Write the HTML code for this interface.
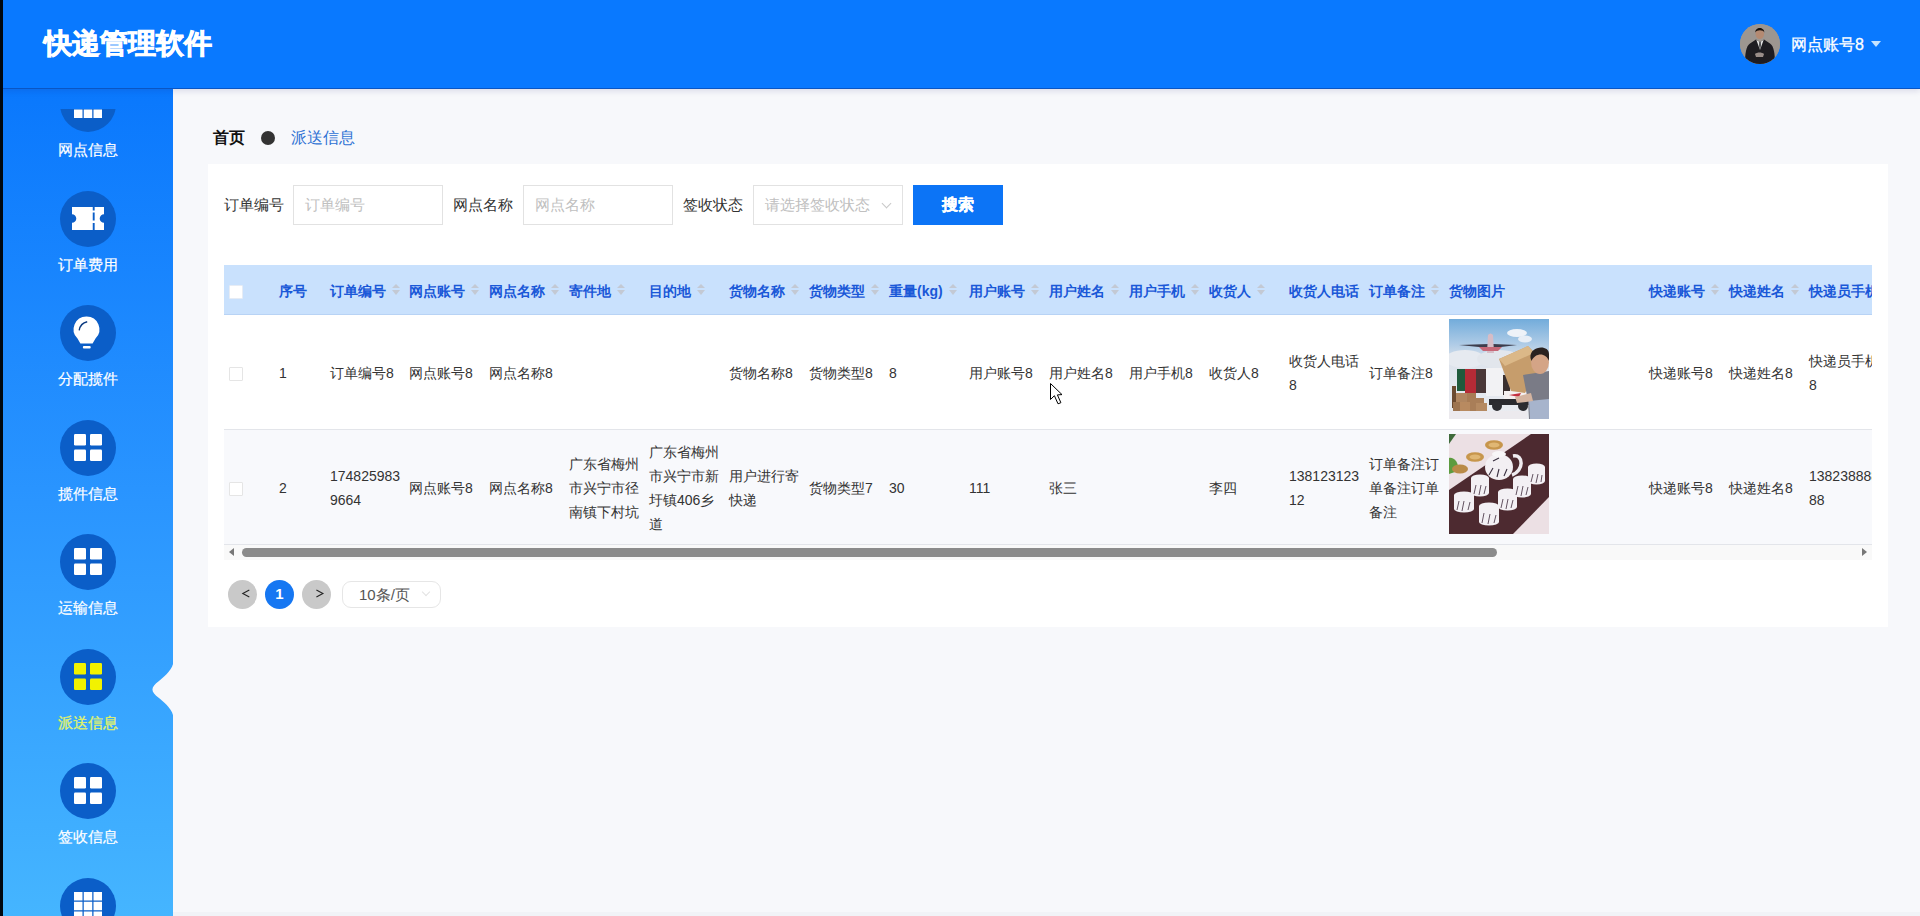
<!DOCTYPE html>
<html><head><meta charset="utf-8">
<style>
*{box-sizing:border-box;margin:0;padding:0}
html,body{width:1920px;height:916px;overflow:hidden;background:#f7f8fb;font-family:"Liberation Sans",sans-serif;color:#333}
#hdr{position:absolute;left:0;top:0;width:1920px;height:88px;background:#0979ff;z-index:5;box-shadow:0 1px 0 #0a56c4,0 3px 6px rgba(20,20,110,.13)}
#edge{position:absolute;left:0;top:0;width:3px;height:916px;background:#000810;z-index:20}
#title{position:absolute;left:44px;top:23.5px;font-size:28px;font-weight:bold;color:#fff;line-height:40px;-webkit-text-stroke:0.8px #fff}
#avatar{position:absolute;left:1740px;top:24px;width:40px;height:40px;border-radius:50%;overflow:hidden;background:#9a9590}
#uname{position:absolute;left:1791px;top:34px;font-size:16px;color:#fff;line-height:22px;-webkit-text-stroke:0.3px #fff}
#caret{position:absolute;left:1871px;top:41px;width:0;height:0;border-left:5px solid transparent;border-right:5px solid transparent;border-top:6px solid #c5e3ff}
#side{position:absolute;left:0;top:89px;width:173px;height:827px;background:linear-gradient(180deg,#0a78fd 0%,#2a95ff 50%,#45b5ff 100%);z-index:3}
#menu{position:absolute;left:0;top:20px;width:173px;height:807px;overflow:hidden}
.circ{position:absolute;left:60px;width:56px;height:56px;border-radius:50%;background:#0b5ec8}
.circ svg{position:absolute;left:0;top:0}
.lbl{position:absolute;left:0;width:176px;text-align:center;font-size:15px;color:#fff;line-height:20px;-webkit-text-stroke:0.2px #fff}
.lbl.act{color:#e0f36a;-webkit-text-stroke:0.3px #e0f36a}
#notch{position:absolute;left:0;top:0;z-index:4}
#crumb{position:absolute;left:213px;top:127px;height:22px;line-height:22px;font-size:16px;z-index:2}
#crumb b{position:absolute;left:0;top:0;color:#111;white-space:nowrap}
#crumb .dot{position:absolute;left:48px;top:4px;width:14px;height:14px;border-radius:50%;background:#333}
#crumb span{position:absolute;left:78px;top:0;color:#2f72d4;white-space:nowrap}
#card{position:absolute;left:208px;top:164px;width:1680px;height:463px;background:#fff}
.flbl{position:absolute;top:194px;font-size:15px;color:#333;line-height:22px;white-space:nowrap}
.inp{position:absolute;top:185px;width:150px;height:40px;border:1px solid #e2e2e2;background:#fff;font-size:15px;color:#c0c0c0;line-height:38px;padding-left:11px;white-space:nowrap}
.inp .chev{position:absolute;right:12px;top:14px;width:7px;height:7px;border-right:1px solid #c8c8c8;border-bottom:1px solid #c8c8c8;transform:rotate(45deg)}
#btn{position:absolute;left:913px;top:185px;width:90px;height:40px;background:#0c74f6;color:#fff;font-size:16px;font-weight:bold;text-align:center;line-height:39px;-webkit-text-stroke:0.3px #fff}
#tbl{position:absolute;left:224px;top:265px;width:1648px;height:295px;overflow:hidden}
#thead{position:absolute;left:0;top:0;width:1648px;height:50px;background:#c9e1fd;border-bottom:1px solid #b8d3f5}
.th{position:absolute;top:1px;height:50px;line-height:50px;font-size:14px;font-weight:bold;color:#1a58d8;white-space:nowrap;overflow:visible}
.sort{display:inline-block;position:relative;width:8px;height:12px;margin-left:6px;vertical-align:middle;top:-2px}
.sort:before{content:"";position:absolute;left:0;top:0;border-left:4px solid transparent;border-right:4px solid transparent;border-bottom:4px solid #c3c9d4}
.sort:after{content:"";position:absolute;left:0;top:6px;border-left:4px solid transparent;border-right:4px solid transparent;border-top:5px solid #c3c9d4}
.tr{position:absolute;left:0;width:1648px;border-bottom:1px solid #e3e5ea}
.td{position:absolute;width:72px;display:flex;align-items:center;font-size:14px;line-height:24px;color:#333;word-break:break-all}
.chk{position:absolute;width:14px;height:14px;border:1px solid #e5e5e5;background:#fff;border-radius:1px}
.img{position:absolute;width:100px;height:100px;overflow:hidden}
#sbar{position:absolute;left:0;top:280px;width:1648px;height:15px;background:#f9f9f9}
#sbar .thumb{position:absolute;left:18px;top:3px;width:1255px;height:9px;border-radius:5px;background:#8b8b8b}
#sbar .la{position:absolute;left:5px;top:3px;border-top:4.5px solid transparent;border-bottom:4.5px solid transparent;border-right:5px solid #777}
#sbar .ra{position:absolute;left:1638px;top:3px;border-top:4.5px solid transparent;border-bottom:4.5px solid transparent;border-left:5px solid #777}
.pg{position:absolute;top:580px;width:29px;height:29px;border-radius:50%;background:#c9c9c9;color:#222;text-align:center;line-height:28px;font-size:14px}
.pg svg{position:absolute;left:0;top:0}
.pg.cur{background:#1677f2;color:#fff;font-weight:bold;font-size:15px}
#psel{position:absolute;left:342px;top:581px;width:99px;height:27px;border:1px solid #e6e6e6;border-radius:9px;background:#fff;font-size:15px;color:#555;line-height:25px;padding-left:16px}
#psel .chev{position:absolute;right:11px;top:7px;width:6px;height:6px;border-right:1px solid #e2e2e2;border-bottom:1px solid #e2e2e2;transform:rotate(45deg)}
#cursor{position:absolute;left:1050px;top:383px;z-index:30}
</style></head>
<body>
<div id="edge"></div>
<div id="hdr">
  <div id="title">快递管理软件</div>
  <div id="avatar"><svg width="40" height="40" viewBox="0 0 40 40"><rect width="40" height="40" fill="#9d9690"/><path d="M5 40 C5 30 6 22 10 19.5 L16 15.5 L20 18 L24 15.5 L30 19.5 C34 22 35 30 35 40 Z" fill="#1e1c21"/><path d="M16.3 15.8 L20 26 L23.7 15.8 L20 18.2 Z" fill="#e4e4e4"/><path d="M19.3 18 L19.2 21 L20 27 L20.8 21 L20.7 18 Z" fill="#2a2a2e"/><ellipse cx="19.8" cy="9.5" rx="4.3" ry="5.6" fill="#b48a72"/><path d="M15.3 8.5 C15 2.5 24.5 2.5 24.3 8.5 C23.5 5.5 16.5 5.5 15.3 8.5 Z" fill="#16110e"/><path d="M15 30 C17 28 22 28 24 30 L23 33 L16 33 Z" fill="#b9aaa4" opacity=".8"/></svg></div>
  <div id="uname">网点账号8</div>
  <div id="caret"></div>
</div>
<div id="side"><div id="menu">
<div class="circ" style="top:-32.7px"><svg width="56" height="56" viewBox="0 0 56 56"><rect x="14" y="14" width="8.5" height="8.5" fill="#fff"/><rect x="23.75" y="14" width="8.5" height="8.5" fill="#fff"/><rect x="33.5" y="14" width="8.5" height="8.5" fill="#fff"/><rect x="14" y="23.75" width="8.5" height="8.5" fill="#fff"/><rect x="23.75" y="23.75" width="8.5" height="8.5" fill="#fff"/><rect x="33.5" y="23.75" width="8.5" height="8.5" fill="#fff"/><rect x="14" y="33.5" width="8.5" height="8.5" fill="#fff"/><rect x="23.75" y="33.5" width="8.5" height="8.5" fill="#fff"/><rect x="33.5" y="33.5" width="8.5" height="8.5" fill="#fff"/></svg></div>
<div class="lbl" style="top:31.1px">网点信息</div>
<div class="circ" style="top:81.8px"><svg width="56" height="56" viewBox="0 0 56 56"><path d="M12 16 H44 V23.2 A4.3 4.3 0 0 0 44 31.8 V39 H12 V31.8 A4.3 4.3 0 0 0 12 23.2 Z" fill="#fff"/><path d="M33.7 16 V39" stroke="#0b5ec8" stroke-width="1.9" stroke-dasharray="3.6 2 8 2.5 7"/></svg></div>
<div class="lbl" style="top:145.6px">订单费用</div>
<div class="circ" style="top:196.3px"><svg width="56" height="56" viewBox="0 0 56 56"><path d="M26.5 11.5 A12.8 12.8 0 0 1 35.5 33.5 L32.6 38.6 H20.4 L17.5 33.5 A12.8 12.8 0 0 1 26.5 11.5 Z" fill="#fff"/><rect x="22.9" y="41" width="7.8" height="2.4" rx="1" fill="#fff"/><path d="M19.2 25.3 A10.5 10.5 0 0 1 27.2 16.8" stroke="#0b3a80" stroke-width="1.4" fill="none"/></svg></div>
<div class="lbl" style="top:260.1px">分配揽件</div>
<div class="circ" style="top:310.8px"><svg width="56" height="56" viewBox="0 0 56 56"><rect x="14" y="14" width="12" height="11.5" rx="1.2" fill="#fff"/><rect x="30" y="14" width="12" height="11.5" rx="1.2" fill="#fff"/><rect x="14" y="29.5" width="12" height="11.5" rx="1.2" fill="#fff"/><rect x="30" y="29.5" width="12" height="11.5" rx="1.2" fill="#fff"/></svg></div>
<div class="lbl" style="top:374.6px">揽件信息</div>
<div class="circ" style="top:425.3px"><svg width="56" height="56" viewBox="0 0 56 56"><rect x="14" y="14" width="12" height="11.5" rx="1.2" fill="#fff"/><rect x="30" y="14" width="12" height="11.5" rx="1.2" fill="#fff"/><rect x="14" y="29.5" width="12" height="11.5" rx="1.2" fill="#fff"/><rect x="30" y="29.5" width="12" height="11.5" rx="1.2" fill="#fff"/></svg></div>
<div class="lbl" style="top:489.1px">运输信息</div>
<div class="circ" style="top:539.8px"><svg width="56" height="56" viewBox="0 0 56 56"><rect x="14" y="14" width="12" height="11.5" rx="1.2" fill="#f2f200"/><rect x="30" y="14" width="12" height="11.5" rx="1.2" fill="#f2f200"/><rect x="14" y="29.5" width="12" height="11.5" rx="1.2" fill="#f2f200"/><rect x="30" y="29.5" width="12" height="11.5" rx="1.2" fill="#f2f200"/></svg></div>
<div class="lbl act" style="top:603.6px">派送信息</div>
<div class="circ" style="top:654.3px"><svg width="56" height="56" viewBox="0 0 56 56"><rect x="14" y="14" width="12" height="11.5" rx="1.2" fill="#fff"/><rect x="30" y="14" width="12" height="11.5" rx="1.2" fill="#fff"/><rect x="14" y="29.5" width="12" height="11.5" rx="1.2" fill="#fff"/><rect x="30" y="29.5" width="12" height="11.5" rx="1.2" fill="#fff"/></svg></div>
<div class="lbl" style="top:718.1px">签收信息</div>
<div class="circ" style="top:768.8px"><svg width="56" height="56" viewBox="0 0 56 56"><rect x="14" y="14" width="8.5" height="8.5" fill="#fff"/><rect x="23.75" y="14" width="8.5" height="8.5" fill="#fff"/><rect x="33.5" y="14" width="8.5" height="8.5" fill="#fff"/><rect x="14" y="23.75" width="8.5" height="8.5" fill="#fff"/><rect x="23.75" y="23.75" width="8.5" height="8.5" fill="#fff"/><rect x="33.5" y="23.75" width="8.5" height="8.5" fill="#fff"/><rect x="14" y="33.5" width="8.5" height="8.5" fill="#fff"/><rect x="23.75" y="33.5" width="8.5" height="8.5" fill="#fff"/><rect x="33.5" y="33.5" width="8.5" height="8.5" fill="#fff"/></svg></div>
</div></div>
<svg id="notch" width="180" height="916" viewBox="0 0 180 916"><path d="M173.5 661 C173 669 166 675 159 681 C150.3 687.5 150.3 691.5 159 698 C166 704 173 710 173.5 718 Z" fill="#f7f8fb"/></svg>
<div id="crumb"><b>首页</b><i class="dot"></i><span>派送信息</span></div>
<div id="card"></div>
<div class="flbl" style="left:224px">订单编号</div>
<div class="inp" style="left:293px">订单编号</div>
<div class="flbl" style="left:453px">网点名称</div>
<div class="inp" style="left:523px">网点名称</div>
<div class="flbl" style="left:683px">签收状态</div>
<div class="inp" style="left:753px">请选择签收状态<i class="chev"></i></div>
<div id="btn">搜索</div>
<div id="tbl">
  <div id="thead"><div class="chk" style="left:5px;top:20px;background:#fff;border-color:#e6ecf5"></div><div class="th" style="left:55px;width:41px">序号</div><div class="th" style="left:106px;width:69px">订单编号<i class="sort"></i></div><div class="th" style="left:185px;width:70px">网点账号<i class="sort"></i></div><div class="th" style="left:265px;width:70px">网点名称<i class="sort"></i></div><div class="th" style="left:345px;width:70px">寄件地<i class="sort"></i></div><div class="th" style="left:425px;width:70px">目的地<i class="sort"></i></div><div class="th" style="left:505px;width:70px">货物名称<i class="sort"></i></div><div class="th" style="left:585px;width:70px">货物类型<i class="sort"></i></div><div class="th" style="left:665px;width:70px">重量(kg)<i class="sort"></i></div><div class="th" style="left:745px;width:70px">用户账号<i class="sort"></i></div><div class="th" style="left:825px;width:70px">用户姓名<i class="sort"></i></div><div class="th" style="left:905px;width:70px">用户手机<i class="sort"></i></div><div class="th" style="left:985px;width:70px">收货人<i class="sort"></i></div><div class="th" style="left:1065px;width:70px">收货人电话</div><div class="th" style="left:1145px;width:70px">订单备注<i class="sort"></i></div><div class="th" style="left:1225px;width:190px">货物图片</div><div class="th" style="left:1425px;width:70px">快递账号<i class="sort"></i></div><div class="th" style="left:1505px;width:70px">快递姓名<i class="sort"></i></div><div class="th" style="left:1585px;width:70px">快递员手机</div></div>
  <div class="tr" style="top:50px;height:115px;background:#fff"></div><div class="chk" style="left:5px;top:101.5px"></div><div class="td" style="left:55px;top:51px;height:114px">1</div><div class="td" style="left:106px;top:51px;height:114px">订单编号8</div><div class="td" style="left:185px;top:51px;height:114px">网点账号8</div><div class="td" style="left:265px;top:51px;height:114px">网点名称8</div><div class="td" style="left:505px;top:51px;height:114px">货物名称8</div><div class="td" style="left:585px;top:51px;height:114px">货物类型8</div><div class="td" style="left:665px;top:51px;height:114px">8</div><div class="td" style="left:745px;top:51px;height:114px">用户账号8</div><div class="td" style="left:825px;top:51px;height:114px">用户姓名8</div><div class="td" style="left:905px;top:51px;height:114px">用户手机8</div><div class="td" style="left:985px;top:51px;height:114px">收货人8</div><div class="td" style="left:1065px;top:51px;height:114px">收货人电话8</div><div class="td" style="left:1145px;top:51px;height:114px">订单备注8</div><div class="img" style="left:1225px;top:54px"><svg width="100" height="100" viewBox="0 0 100 100">
<defs><linearGradient id="sky" x1="0" y1="0" x2="0" y2="1"><stop offset="0" stop-color="#72acdb"/><stop offset=".25" stop-color="#aecbe6"/><stop offset=".42" stop-color="#dde3ec"/><stop offset="1" stop-color="#ebedf1"/></linearGradient></defs>
<rect width="100" height="100" fill="url(#sky)"/>
<ellipse cx="68" cy="14" rx="10" ry="4" fill="#eef2f8"/><ellipse cx="76" cy="20" rx="7" ry="3.5" fill="#e8eef6"/>
<ellipse cx="16" cy="40" rx="20" ry="9" fill="#e6eaf0"/>
<ellipse cx="50" cy="40" rx="22" ry="9" fill="#e2e6ec"/>
<path d="M10 26 L40 25 L44 25 L68 26 L44 29 L40 29 Z" fill="#3d3d4c"/>
<path d="M39 16 Q41.5 13 44 16 L45 34 L38 34 Z" fill="#d6bcc6"/>
<path d="M30 28 L53 28 L49 32 L34 32 Z" fill="#c66878"/>
<rect x="8" y="50" width="8" height="22" fill="#1f5a3c"/>
<rect x="16" y="50" width="11" height="24" fill="#b52b36"/>
<rect x="27" y="50" width="10" height="24" fill="#4a3838"/>
<rect x="37" y="49" width="17" height="28" fill="#f2f2f4"/>
<rect x="54" y="56" width="7" height="20" fill="#3a3030"/>
<rect x="55" y="72" width="25" height="10" fill="#f4f0f0"/>
<path d="M60 76 L72 74 L70 78 Z" fill="#c43040"/>
<rect x="40" y="80" width="40" height="6" fill="#2a2a2e"/>
<circle cx="48" cy="87" r="5" fill="#2c2c30"/><circle cx="74" cy="87" r="5" fill="#2c2c30"/>
<rect x="3" y="67" width="4" height="22" fill="#6b4a30"/>
<rect x="7" y="74" width="11" height="9" fill="#b08660"/><rect x="18" y="74" width="9" height="9" fill="#a87c55"/>
<rect x="11" y="83" width="10" height="10" fill="#b88a60"/><rect x="21" y="79" width="14" height="14" fill="#a97e58"/>
<rect x="4" y="83" width="7" height="10" fill="#9d7450"/><rect x="27" y="84" width="11" height="9" fill="#b58a62"/>
<path d="M50 40 L79 27 L94 42 L76 74 L62 72 Z" fill="#c69d6c"/>
<path d="M50 40 L79 27 L85 34 L56 47 Z" fill="#dbb888"/>
<path d="M74 56 L100 52 L100 100 L80 100 L79 82 Z" fill="#7a7b86"/>
<path d="M80 82 L100 80 L100 100 L81 100 Z" fill="#a7b4cc"/>
<path d="M66 78 L82 74 L84 82 L68 84 Z" fill="#d4b4a0"/>
<ellipse cx="91" cy="43" rx="9" ry="12" fill="#d4a486"/>
<path d="M81.5 39 C80 27 100 25 100 35 L100 42 C97 34 87 33 82.5 42 Z" fill="#2a2220"/>
<rect x="0" y="92" width="78" height="8" fill="#eceaee"/>
</svg>
</div><div class="td" style="left:1425px;top:51px;height:114px">快递账号8</div><div class="td" style="left:1505px;top:51px;height:114px">快递姓名8</div><div class="td" style="left:1585px;top:51px;height:114px">快递员手机8</div><div class="tr" style="top:165px;height:115px;background:#f8f9fc"></div><div class="chk" style="left:5px;top:216.5px"></div><div class="td" style="left:55px;top:166px;height:114px">2</div><div class="td" style="left:106px;top:166px;height:114px">1748259839664</div><div class="td" style="left:185px;top:166px;height:114px">网点账号8</div><div class="td" style="left:265px;top:166px;height:114px">网点名称8</div><div class="td" style="left:345px;top:166px;height:114px">广东省梅州市兴宁市径南镇下村坑</div><div class="td" style="left:425px;top:166px;height:114px">广东省梅州市兴宁市新圩镇406乡道</div><div class="td" style="left:505px;top:166px;height:114px">用户进行寄快递</div><div class="td" style="left:585px;top:166px;height:114px">货物类型7</div><div class="td" style="left:665px;top:166px;height:114px">30</div><div class="td" style="left:745px;top:166px;height:114px">111</div><div class="td" style="left:825px;top:166px;height:114px">张三</div><div class="td" style="left:985px;top:166px;height:114px">李四</div><div class="td" style="left:1065px;top:166px;height:114px">13812312312</div><div class="td" style="left:1145px;top:166px;height:114px">订单备注订单备注订单备注</div><div class="img" style="left:1225px;top:169px"><svg width="100" height="100" viewBox="0 0 100 100">
<rect width="100" height="100" fill="#ece0e4"/>
<path d="M0 56 L82 0 L100 0 L100 63 L64 100 L0 100 Z" fill="#4d2a30"/>
<path d="M0 0 L7 0 L0 10 Z" fill="#3f6a3a"/>
<path d="M0 24 C5 23 10 28 9 37 L0 40 Z" fill="#5d9b3f"/>
<ellipse cx="45" cy="11" rx="9" ry="4.8" fill="#c7964c"/><ellipse cx="45" cy="11" rx="5.5" ry="2.6" fill="#e0b774"/>
<ellipse cx="26" cy="23" rx="9" ry="4.8" fill="#c7964c"/><ellipse cx="26" cy="23" rx="5.5" ry="2.6" fill="#e0b774"/>
<ellipse cx="11" cy="35" rx="8" ry="4.6" fill="#b98a48"/>
<path d="M64 22 C75 20 75 37 63 41" stroke="#f0ecf0" stroke-width="3.5" fill="none"/>
<ellipse cx="50" cy="33" rx="14" ry="13" fill="#f3eff3"/>
<ellipse cx="50" cy="20" rx="7" ry="3" fill="#f8f6f8"/>
<path d="M40 41 L44 34 M48 43 L50 35 M55 42 L58 35 M44 27 L50 24" stroke="#3a3040" stroke-width="1.1" fill="none"/>
<g fill="#f3f0f4">
<path d="M22 44 a9 3.5 0 0 1 18 0 L40 59 a9 3.5 0 0 1 -18 0 Z"/>
<path d="M5 61 a10 3.5 0 0 1 20 0 L25 75 a10 3.5 0 0 1 -20 0 Z"/>
<path d="M30 72 a10 3.5 0 0 1 20 0 L50 88 a10 3.5 0 0 1 -20 0 Z"/>
<path d="M49 58 a9.5 3.5 0 0 1 19 0 L68 73 a9.5 3.5 0 0 1 -19 0 Z"/>
<path d="M64 45 a9 3.5 0 0 1 18 0 L82 60 a9 3.5 0 0 1 -18 0 Z"/>
<path d="M79 33 a8.5 3.5 0 0 1 17 0 L96 47 a8.5 3.5 0 0 1 -17 0 Z"/>
</g>
<g stroke="#4a3848" stroke-width="1" opacity=".85">
<path d="M25 60 L27 51 M30 61 L32 51 M35 60 L37 52"/>
<path d="M8 76 L10 67 M13 77 L15 67 M19 76 L21 68"/>
<path d="M33 89 L35 79 M39 90 L41 80 M45 89 L47 81"/>
<path d="M52 74 L54 65 M57 75 L59 65 M62 74 L64 66"/>
<path d="M67 61 L69 52 M72 62 L74 52 M77 61 L79 53"/>
<path d="M82 48 L84 40 M87 49 L89 40 M92 48 L93 41"/>
</g>
</svg>
</div><div class="td" style="left:1425px;top:166px;height:114px">快递账号8</div><div class="td" style="left:1505px;top:166px;height:114px">快递姓名8</div><div class="td" style="left:1585px;top:166px;height:114px">13823888888</div>
  <div id="sbar"><i class="la"></i><i class="thumb"></i><i class="ra"></i></div>
</div>
<div class="pg" style="left:228px"><svg class="chv" width="29" height="29"><path d="M21.3 10 L14.8 13.5 L21.3 17" stroke="#222" stroke-width="1.1" fill="none"/></svg></div>
<div class="pg cur" style="left:265px">1</div>
<div class="pg" style="left:302px"><svg class="chv" width="29" height="29"><path d="M14.4 10 L20.9 13.5 L14.4 17" stroke="#222" stroke-width="1.1" fill="none"/></svg></div>
<div id="psel">10条/页<i class="chev"></i></div>
<svg id="cursor" width="14" height="22" viewBox="0 0 14 22"><path d="M0.5 0.5 L0.5 16.5 L4.4 12.7 L8 20.8 L10.9 19.7 L7.4 11.9 L12 11.6 Z" fill="#fff" stroke="#000" stroke-width="1" stroke-linejoin="miter"/></svg>
<div style="position:absolute;left:173px;top:912px;width:1747px;height:4px;background:#f1f3f7"></div>
</body></html>
